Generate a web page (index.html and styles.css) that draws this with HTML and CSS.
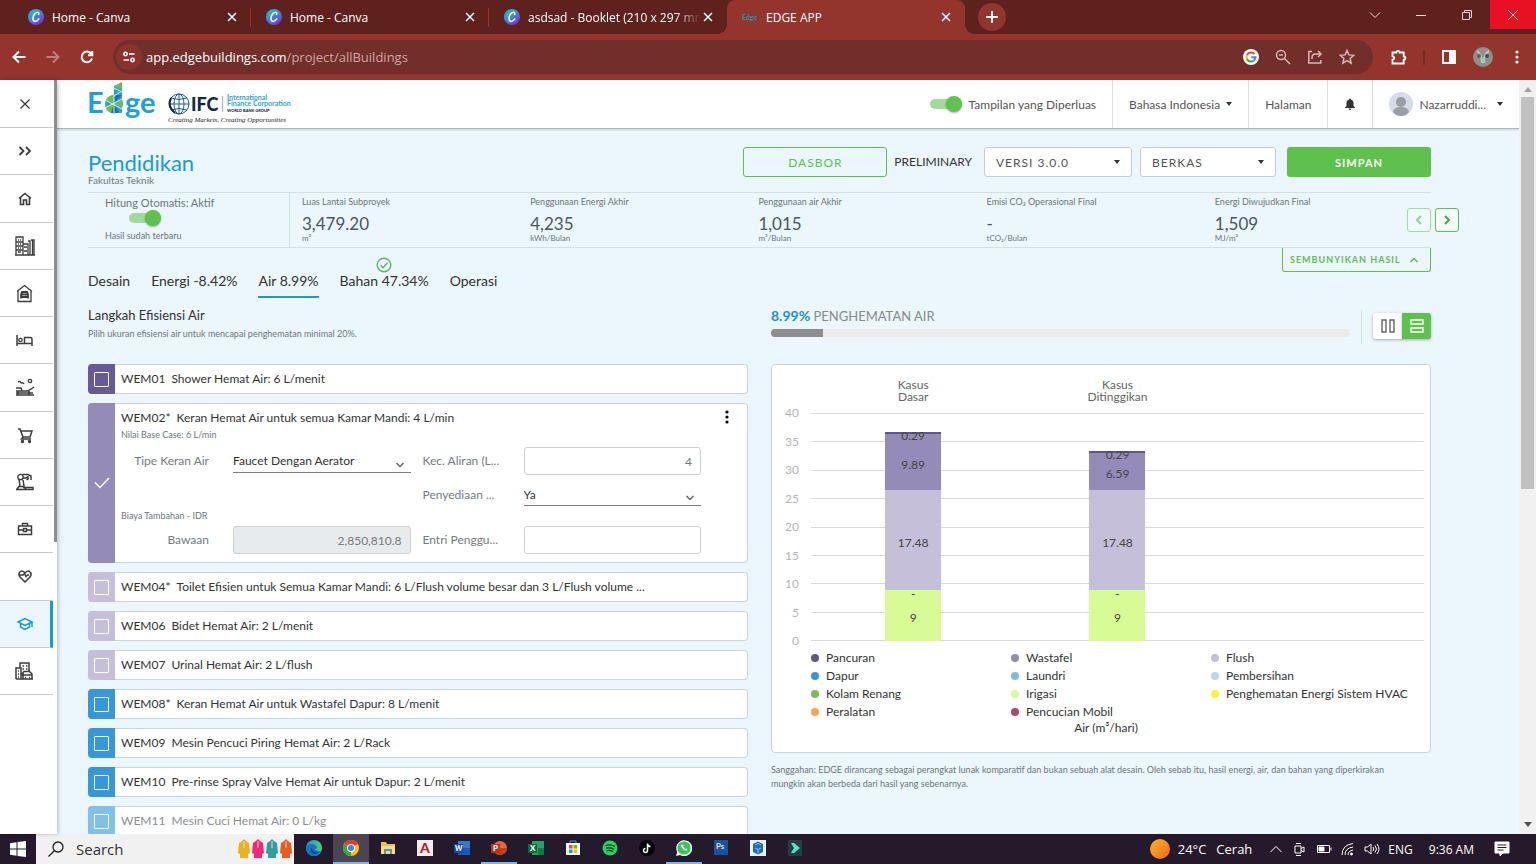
FILE: index.html
```html
<!DOCTYPE html>
<html lang="id">
<head>
  <meta charset="UTF-8">
  <title>EDGE APP</title>
  <link rel="stylesheet" href="styles.css">
</head>
<body>
  <svg class="defs" aria-hidden="true">
    <defs>
      <linearGradient id="canvaFill" x1="0" y1="0" x2="0.7" y2="1">
        <stop offset="0" stop-color="#14c8cc"/>
        <stop offset="0.5" stop-color="#3a8fd8"/>
        <stop offset="1" stop-color="#7a2be0"/>
      </linearGradient>
      <linearGradient id="sunFill" x1="0" y1="0" x2="1" y2="1">
        <stop offset="0" stop-color="#fbb52c"/>
        <stop offset="1" stop-color="#f2641c"/>
      </linearGradient>
      <linearGradient id="edgeFill" x1="0" y1="0" x2="1" y2="0">
        <stop offset="0" stop-color="#1b8fe0"/>
        <stop offset="1" stop-color="#4fd46a"/>
      </linearGradient>
    </defs>
    <symbol id="canva" viewBox="0 0 16 16">
      <circle cx="8" cy="8" r="8" fill="url(#canvaFill)"/>
      <path d="M10.6 5.6c.6-1.6-.5-2.4-1.7-2.2C6.7 3.8 5 6.6 5 9.2c0 2 .9 3.2 2.3 3.2 1.400 0 2.700-1 3.500-2.500" fill="none" stroke="#fff" stroke-width="1.5" stroke-linecap="round"/>
    </symbol>
    <symbol id="x" viewBox="0 0 10 10">
      <path d="M1 1l8 8M9 1l-8 8" fill="none" stroke="currentColor" stroke-width="1.5"/>
    </symbol>
    <symbol id="caret" viewBox="0 0 6 4">
      <path d="M0 0h6L3 4z" fill="currentColor"/>
    </symbol>
    <symbol id="chevron" viewBox="0 0 10 6">
      <path d="M1.500 1L5 4.500 8.500 1" fill="none" stroke="currentColor" stroke-width="1.5"/>
    </symbol>
  </svg>

  <div class="tab-strip">
    <div class="browser-tab">
      <svg class="favicon"><use href="#canva"/></svg>
      <span>Home - Canva</span>
      <button aria-label="Close tab"><svg><use href="#x"/></svg></button>
    </div>
    <div class="browser-tab">
      <svg class="favicon"><use href="#canva"/></svg>
      <span>Home - Canva</span>
      <button aria-label="Close tab"><svg><use href="#x"/></svg></button>
    </div>
    <div class="browser-tab last">
      <svg class="favicon"><use href="#canva"/></svg>
      <span class="faded">asdsad - Booklet (210 x 297 mm</span>
      <button aria-label="Close tab"><svg><use href="#x"/></svg></button>
    </div>
    <div class="browser-tab active">
      <svg class="favicon" viewBox="0 0 16 16"><text x="0" y="11" font-family="Lato" font-weight="900" font-size="7" fill="#2a8ba5">Edge</text></svg>
      <span>EDGE APP</span>
      <button aria-label="Close tab"><svg><use href="#x"/></svg></button>
    </div>
    <button class="new-tab" aria-label="New tab"><svg viewBox="0 0 12 12"><path d="M6 0v12M0 6h12" stroke="currentColor" stroke-width="2"/></svg></button>
    <div class="window-buttons">
      <button aria-label="Search tabs"><svg viewBox="0 0 12 12"><path d="M1 3.500l5 5 5-5"/></svg></button>
      <button aria-label="Minimize"><svg viewBox="0 0 12 12"><path d="M1 6.500h10"/></svg></button>
      <button aria-label="Restore"><svg viewBox="0 0 12 12"><path d="M1.500 3.500h7v7h-7zM3.500 3.500v-2h7v7h-2"/></svg></button>
      <button class="win-close" aria-label="Close"><svg viewBox="0 0 12 12"><path d="M1 1l10 10M11 1L1 11"/></svg></button>
    </div>
  </div>

  <div class="toolbar">
    <button aria-label="Back"><svg viewBox="0 0 16 16"><path d="M14.500 8H2.500M8 2.500L2.500 8 8 13.500"/></svg></button>
    <button class="dim" aria-label="Forward"><svg viewBox="0 0 16 16"><path d="M1.500 8h12M8 2.500L13.500 8 8 13.500"/></svg></button>
    <button aria-label="Reload"><svg viewBox="0 0 16 16"><path d="M13 9.500A5.300 5.300 0 1 1 12 4.500M13.300 2v4.300H9"/></svg></button>
    <div class="omnibox">
      <button class="site-info" aria-label="Site information"><svg viewBox="0 0 14 14"><circle cx="3.500" cy="4" r="1.700"/><path d="M7 4h5.500M1.500 10H7"/><circle cx="10.500" cy="10" r="1.700"/></svg></button>
      <span class="url">app.edgebuildings.com<i>/project/allBuildings</i></span>
      <div class="omni-actions">
        <button aria-label="Google"><svg viewBox="0 0 16 16"><circle class="fill-white" cx="8" cy="8" r="8"/><path d="M11.500 5A4.500 4.500 0 0 0 4 6" stroke="#ea4335" stroke-width="2"/><path d="M4 6a4.500 4.500 0 0 0 0 4" stroke="#fbbc05" stroke-width="2"/><path d="M4 10a4.500 4.500 0 0 0 7 1.500" stroke="#34a853" stroke-width="2"/><path d="M11 11.500A4.500 4.500 0 0 0 12.500 8.300H8.300" stroke="#4285f4" stroke-width="2"/></svg></button>
        <button aria-label="Zoom"><svg viewBox="0 0 16 16"><circle cx="6" cy="6" r="4.500"/><path d="M9.500 9.500l5.500 5.500M4 6h4"/></svg></button>
        <button aria-label="Share"><svg viewBox="0 0 16 16"><path d="M5 2.500H1.800V14h12v-3M5 10V8.500Q5 5 8.500 5H14M11 2l3 3-3 3"/></svg></button>
        <button aria-label="Bookmark"><svg viewBox="0 0 16 16"><path d="M8 1.500l1.900 4.400 4.800.4-3.600 3.200 1 4.700L8 11.700l-4.100 2.500 1-4.700L1.300 6.300l4.800-.4z"/></svg></button>
      </div>
    </div>
    <div class="toolbar-end">
      <button aria-label="Extensions"><svg viewBox="0 0 16 16"><path d="M1.500 3.500h3.800a1.700 1.700 0 1 1 3.400 0h4v3.800a1.700 1.700 0 1 1 0 3.400v3.800H1.500v-3.800a1.700 1.700 0 0 0 0-3.400z" stroke-width="1.800"/></svg></button>
      <span class="bar-sep"></span>
      <button aria-label="Side panel"><svg viewBox="0 0 16 16"><path d="M2 2h12v12H2z" stroke-width="1.800"/><path class="fill-white" d="M8 2h6v12H8z"/></svg></button>
      <button aria-label="Profile"><svg class="profile" viewBox="0 0 20 20"><circle cx="10" cy="10" r="10" fill="#8d918c" stroke="none"/><path d="M4 4q5 3 5 12M16 4q-5 2-5 12" stroke="#c0c4be"/><circle cx="6" cy="9" r="2" fill="#5b6161" stroke="none"/><circle cx="14" cy="9" r="2" fill="#454b4b" stroke="none"/></svg></button>
      <button aria-label="Menu"><svg viewBox="0 0 16 16"><g class="fill-white"><circle cx="8" cy="3" r="1.600"/><circle cx="8" cy="8" r="1.600"/><circle cx="8" cy="13" r="1.600"/></g></svg></button>
    </div>
  </div>

  <div class="viewport">
    <nav class="side-nav">
      <ul>
        <li><a href="#" aria-label="Tutup"><svg viewBox="0 0 20 20"><path d="M5.500 5.500l9 9M14.500 5.500l-9 9"/></svg></a></li>
        <li><a href="#" aria-label="Perluas"><svg viewBox="0 0 20 20"><path d="M4.500 6l4 4-4 4M11 6l4 4-4 4" stroke-width="1.800"/></svg></a></li>
        <li><a href="#" aria-label="Beranda"><svg viewBox="0 0 20 20"><path d="M4 9.500L10 4.500l6 5M5.500 8.500V15.500h3v-4.500h3v4.500h3V8.500" stroke-width="1.600"/></svg></a></li>
        <li><a href="#" aria-label="Kantor"><svg viewBox="0 0 20 20"><path d="M1 19V1h7v18M0 19h20M8 8h5v11M13 5h2v14M16 4h3v15M17.500 4v15M3 4h1M5 4h1M3 8h1M5 8h1M3 12h1M5 12h1M3 16h3M9 11h3M9 15h3"/><path d="M1 6h7M1 10h7M1 14h7"/></svg></a></li>
        <li><a href="#" aria-label="Rumah"><svg viewBox="0 0 20 20"><path d="M2 8.500L9.500 2.500 17 8.500M3 8v10.500h13V8"/><path d="M6 15.500v-4l1-2.500h5l1 2.500v4M6.500 11.500h6M6 14h7" stroke-width="1.800"/></svg></a></li>
        <li><a href="#" aria-label="Hotel"><svg viewBox="0 0 20 20"><path d="M2 5v11M2 13.500h15V16M17 13.500V9q0-1.500-1.500-1.500H9.500v6" stroke-width="1.500"/><circle cx="5.500" cy="10" r="1.700"/></svg></a></li>
        <li><a href="#" aria-label="Resor"><svg viewBox="0 0 20 20"><circle cx="15" cy="3" r="1.700"/><path d="M3 4q2-1.500 3 1M6 5q2-1 3 1M1 17h18M1 13h12l6-4M1 10h5l1 3M3 13v4M14 13v4M1 15h17" stroke-width="1.500"/></svg></a></li>
        <li><a href="#" aria-label="Ritel"><svg viewBox="0 0 20 20"><path d="M3 4h2l3 8h7l2-6H6M8 12l-1.500 2H16" stroke-width="1.500"/><circle cx="7.500" cy="16.500" r="1" fill="currentColor"/><circle cx="14.500" cy="16.500" r="1" fill="currentColor"/></svg></a></li>
        <li><a href="#" aria-label="Industri"><svg viewBox="0 0 20 20"><path d="M1 17.500h17v-2H8M2 17l2-2.500h5l2 3M5 14L4 7M9 14l-1-6M7.500 2.500H13l3 1.500v4M13 4v3l-1.500 1M8 6h3l2-1" stroke-width="1.500"/><circle cx="5.500" cy="5" r="2.700"/></svg></a></li>
        <li><a href="#" aria-label="Perkantoran"><svg viewBox="0 0 20 20"><path d="M3.500 7h13v8.500h-13zM7.500 7V4.500h5V7M3.500 11H8M12 11h4.500M8.500 9.500h3v3h-3z" stroke-width="1.500"/></svg></a></li>
        <li><a href="#" aria-label="Kesehatan"><svg viewBox="0 0 20 20"><path d="M10 16L5 11Q3 8.500 4.500 6.500 7 3.500 10 7q3-3.500 5.500-.5Q17 8.500 15 11zM4 9h4l1.500-1.500 1.500 3L12.500 9H14" stroke-width="1.500"/></svg></a></li>
        <li class="current"><a href="#" aria-label="Pendidikan"><svg viewBox="0 0 20 20"><path d="M3 8l7-3.500L17 8l-7 3.500zM5.500 9.500V13L10 15.500 14.500 13V9.500M17 8v5" stroke-width="1.500"/></svg></a></li>
        <li><a href="#" aria-label="Campuran"><svg viewBox="0 0 20 20"><path d="M5 7V2h9v8M1 18V7h5v11M1 18h17M7.500 5H9M11 5h1.500M7.500 8H9M11 8h1.500M3 10h1M3 13h1M3 16h1M7 13l2-2.500h5.500L17 13v5H8v-5zM7 14h10M10 16.500h1M14 16.500h1" stroke-width="1.500"/></svg></a></li>
      </ul>
    </nav>

    <div class="page">
      <header class="site-header">
        <a class="logo" href="#" aria-label="Edge">
          <svg viewBox="0 0 68 42" width="68" height="42">
            <g font-family="Lato" font-weight="700" font-size="29" fill="#1ea0dc">
              <text x="-1" y="32">E</text>
              <text x="37" y="32">ge</text>
            </g>
            <circle cx="26" cy="23" r="9" fill="#2a9fd6"/>
            <path d="M26 5l8-4v31h-8z" fill="#2a9fd6"/>
            <path d="M26 6l8-5v7zM26 23l-8-4q3-5 8-5zM26 23l8-4v8zM26 23l-3 9q-5-2-6-7z" fill="#6cc04a"/>
            <path d="M26 23l-3 9q5 1 8-1zM26 14h8l-8 8z" fill="#1a6fb8"/>
            <path d="M26 14v18M17 19l17 9M17 27l17-9M26 7l8 4M26 15l8-5" stroke="#fff" stroke-width="0.8" fill="none"/>
          </svg>
        </a>
        <a class="logo" href="#" aria-label="IFC">
          <svg viewBox="0 0 124 34" width="124" height="34">
            <g fill="none" stroke="#1d5b92" stroke-width="1">
              <circle cx="11" cy="11" r="10"/>
              <ellipse cx="11" cy="11" rx="5" ry="10"/>
              <path d="M1 11h20M3 5q8 3 16 0M3 17q8-3 16 0M11 1v20"/>
              <path d="M3 5q-4 8 4 15" stroke="#10294a" stroke-width="2"/>
            </g>
            <text x="23" y="18" font-family="Lato" font-weight="900" font-size="18" fill="#10294a">IFC</text>
            <path d="M54.500 3v16" stroke="#8fb9d8"/>
            <g font-family="Lato" font-weight="700" font-size="7" fill="#2aa3dc">
              <text x="59" y="7">International</text>
              <text x="59" y="13">Finance Corporation</text>
            </g>
            <text x="59" y="19" font-family="Lato" font-weight="900" font-size="4" fill="#10294a">WORLD BANK GROUP</text>
            <text x="0" y="29" font-family="Liberation Serif" font-style="italic" font-size="7" fill="#222">Creating Markets, Creating Opportunities</text>
          </svg>
        </a>
        <div class="header-menu">
          <label class="expanded-view"><input class="switch" type="checkbox" checked> Tampilan yang Diperluas</label>
          <button>Bahasa Indonesia <svg class="caret"><use href="#caret"/></svg></button>
          <a href="#">Halaman</a>
          <button aria-label="Notifikasi"><svg class="bell" viewBox="0 0 12 12"><path d="M6 .5q.8 0 .8.900Q9.500 2 9.500 5v3l1.500 1.500v.5H1v-.5L2.500 8V5q0-3 2.700-3.600Q5.200.5 6 .5zM4.700 10.500h2.600Q7 12 6 12t-1.300-1.500z" fill="currentColor"/></svg></button>
          <button class="user"><svg class="avatar" viewBox="0 0 24 24"><circle cx="12" cy="12" r="12" fill="#d5dbe8"/><circle cx="12" cy="10" r="5" fill="#9a9da4"/><path d="M4 20q1-5 8-5t8 5q-3 4-8 4t-8-4z" fill="#9a9da4"/></svg>Nazarruddi...<svg class="caret"><use href="#caret"/></svg></button>
        </div>
      </header>

      <main>
        <div class="title-row">
          <div>
            <h1>Pendidikan</h1>
            <p>Fakultas Teknik</p>
          </div>
          <div class="actions">
            <button class="btn outline">DASBOR</button>
            <span class="status">PRELIMINARY</span>
            <div class="picker version">
              <select aria-label="Versi"><option>VERSI 3.0.0</option></select>
              <svg class="caret"><use href="#caret"/></svg>
            </div>
            <div class="picker file">
              <select aria-label="Berkas"><option>BERKAS</option></select>
              <svg class="caret"><use href="#caret"/></svg>
            </div>
            <button class="btn solid">SIMPAN</button>
          </div>
        </div>

        <section class="results">
          <div class="auto-calc">
            <label for="auto">Hitung Otomatis: Aktif</label>
            <input class="switch" type="checkbox" id="auto" checked>
            <small>Hasil sudah terbaru</small>
          </div>
          <div class="kpis">
            <div class="kpi"><span>Luas Lantai Subproyek</span><strong>3,479.20</strong><small>m²</small></div>
            <div class="kpi"><span>Penggunaan Energi Akhir</span><strong>4,235</strong><small>kWh/Bulan</small></div>
            <div class="kpi"><span>Penggunaan air Akhir</span><strong>1,015</strong><small>m³/Bulan</small></div>
            <div class="kpi"><span>Emisi CO₂ Operasional Final</span><strong>-</strong><small>tCO₂/Bulan</small></div>
            <div class="kpi"><span>Energi Diwujudkan Final</span><strong>1,509</strong><small>MJ/m²</small></div>
          </div>
          <div class="kpi-arrows">
            <button class="prev" aria-label="Sebelumnya" disabled><svg viewBox="0 0 10 10"><path d="M7 1L3 5l4 4"/></svg></button>
            <button aria-label="Berikutnya"><svg viewBox="0 0 10 10"><path d="M3 1l4 4-4 4"/></svg></button>
          </div>
        </section>

        <div class="tabs-row">
          <nav class="tabs">
            <a href="#">Desain</a>
            <a href="#">Energi -8.42%</a>
            <a href="#" class="selected">Air 8.99%</a>
            <a href="#">Bahan 47.34%<svg class="passed" viewBox="0 0 16 16"><circle cx="8" cy="8" r="6.800"/><path d="M4.500 8.300l2.500 2.400 4.500-5"/></svg></a>
            <a href="#">Operasi</a>
          </nav>
          <button class="hide-results">SEMBUNYIKAN HASIL <svg viewBox="0 0 10 6"><path d="M1.500 5L5 1.500 8.500 5"/></svg></button>
        </div>

        <div class="columns intro">
          <div>
            <h2>Langkah Efisiensi Air</h2>
            <p>Pilih ukuran efisiensi air untuk mencapai penghematan minimal 20%.</p>
          </div>
          <div class="savings">
            <div class="savings-bar">
              <p><b>8.99%</b> PENGHEMATAN AIR</p>
              <div class="track"><div class="fill" style="width: 8.99%"></div></div>
            </div>
            <div class="layout-switch">
              <button aria-label="Kolom"><svg viewBox="0 0 14 14"><path d="M1 1h4v12H1zM9 1h4v12H9z"/></svg></button>
              <button class="on" aria-label="Baris"><svg viewBox="0 0 14 14"><path d="M1 1h12v4H1zM1 9h12v4H1z"/></svg></button>
            </div>
          </div>
        </div>

        <div class="columns">
          <div class="measures">
            <div class="measure shower">
              <div class="tick"><input type="checkbox" id="wem01"></div>
              <label for="wem01"><span>WEM01</span>Shower Hemat Air: 6 L/menit</label>
            </div>
            <div class="measure basin">
              <div class="tick"><input type="checkbox" id="wem02" checked><svg viewBox="0 0 16 12"><path d="M1 5.500L6 10.500 15 1"/></svg></div>
              <div class="measure-body">
                <label for="wem02"><span>WEM02*</span>Keran Hemat Air untuk semua Kamar Mandi: 4 L/min</label>
                <button class="more" aria-label="Opsi lain"><svg viewBox="0 0 4 14"><circle cx="2" cy="2" r="1.600"/><circle cx="2" cy="7" r="1.600"/><circle cx="2" cy="12" r="1.600"/></svg></button>
                <p>Nilai Base Case: 6 L/min</p>
                <div class="fields usage">
                  <label for="type">Tipe Keran Air</label>
                  <div class="line-select">
                    <select id="type"><option>Faucet Dengan Aerator</option></select>
                    <svg><use href="#chevron"/></svg>
                  </div>
                  <label for="flow">Kec. Aliran (L...</label>
                  <input type="text" id="flow" value="4">
                  <label class="second" for="supply">Penyediaan ...</label>
                  <div class="line-select">
                    <select id="supply"><option>Ya</option></select>
                    <svg><use href="#chevron"/></svg>
                  </div>
                </div>
                <p>Biaya Tambahan - IDR</p>
                <div class="fields cost">
                  <label for="default">Bawaan</label>
                  <input type="text" id="default" value="2,850,810.8" disabled>
                  <label for="entry">Entri Penggu...</label>
                  <input type="text" id="entry">
                </div>
              </div>
            </div>
            <div class="measure flush">
              <div class="tick"><input type="checkbox" id="wem04"></div>
              <label for="wem04"><span>WEM04*</span>Toilet Efisien untuk Semua Kamar Mandi: 6 L/Flush volume besar dan 3 L/Flush volume ...</label>
            </div>
            <div class="measure flush">
              <div class="tick"><input type="checkbox" id="wem06"></div>
              <label for="wem06"><span>WEM06</span>Bidet Hemat Air: 2 L/menit</label>
            </div>
            <div class="measure flush">
              <div class="tick"><input type="checkbox" id="wem07"></div>
              <label for="wem07"><span>WEM07</span>Urinal Hemat Air: 2 L/flush</label>
            </div>
            <div class="measure kitchen">
              <div class="tick"><input type="checkbox" id="wem08"></div>
              <label for="wem08"><span>WEM08*</span>Keran Hemat Air untuk Wastafel Dapur: 8 L/menit</label>
            </div>
            <div class="measure kitchen">
              <div class="tick"><input type="checkbox" id="wem09"></div>
              <label for="wem09"><span>WEM09</span>Mesin Pencuci Piring Hemat Air: 2 L/Rack</label>
            </div>
            <div class="measure kitchen">
              <div class="tick"><input type="checkbox" id="wem10"></div>
              <label for="wem10"><span>WEM10</span>Pre-rinse Spray Valve Hemat Air untuk Dapur: 2 L/menit</label>
            </div>
            <div class="measure laundry">
              <div class="tick"><input type="checkbox" id="wem11"></div>
              <label for="wem11"><span>WEM11</span>Mesin Cuci Hemat Air: 0 L/kg</label>
            </div>
          </div>

          <div>
            <div class="chart">
              <div class="chart-heads">
                <span>Kasus<br>Dasar</span>
                <span>Kasus<br>Ditinggikan</span>
              </div>
              <div class="plot">
                <div class="scale">
                  <span>40</span><span>35</span><span>30</span><span>25</span><span>20</span><span>15</span><span>10</span><span>5</span><span>0</span>
                </div>
                <div class="area">
                  <i></i><i></i><i></i><i></i><i></i><i></i><i></i><i></i><i></i>
                  <div class="bars">
                    <div class="bar">
                      <div class="seg thin c-shower" style="height: 0.73%"><span>0.29</span></div>
                      <div class="seg c-basin" style="height: 24.73%">9.89</div>
                      <div class="seg c-flush" style="height: 43.7%">17.48</div>
                      <div class="seg thin" style="height: 0%"><span>-</span></div>
                      <div class="seg c-irrigation" style="height: 22.5%">9</div>
                    </div>
                    <div class="bar">
                      <div class="seg thin c-shower" style="height: 0.73%"><span>0.29</span></div>
                      <div class="seg c-basin" style="height: 16.48%">6.59</div>
                      <div class="seg c-flush" style="height: 43.7%">17.48</div>
                      <div class="seg thin" style="height: 0%"><span>-</span></div>
                      <div class="seg c-irrigation" style="height: 22.5%">9</div>
                    </div>
                  </div>
                </div>
              </div>
              <ul class="legend">
                <li><i class="c-shower"></i>Pancuran</li>
                <li><i class="c-basin"></i>Wastafel</li>
                <li><i class="c-flush"></i>Flush</li>
                <li><i class="c-kitchen"></i>Dapur</li>
                <li><i class="c-laundry"></i>Laundri</li>
                <li><i class="c-cleaning"></i>Pembersihan</li>
                <li><i class="c-pool"></i>Kolam Renang</li>
                <li><i class="c-irrigation"></i>Irigasi</li>
                <li><i class="c-hvac"></i>Penghematan Energi Sistem HVAC</li>
                <li><i class="c-appliance"></i>Peralatan</li>
                <li><i class="c-car"></i>Pencucian Mobil</li>
              </ul>
              <p class="unit">Air (m³/hari)</p>
            </div>
            <p class="disclaimer">Sanggahan: EDGE dirancang sebagai perangkat lunak komparatif dan bukan sebuah alat desain. Oleh sebab itu, hasil energi, air, dan bahan yang diperkirakan mungkin akan berbeda dari hasil yang sebenarnya.</p>
          </div>
        </div>
      </main>
    </div>

    <div class="scrollbar">
      <svg viewBox="0 0 8 5"><path d="M0 5l4-5 4 5z" fill="#a3a3a3"/></svg>
      <div class="thumb"></div>
      <svg viewBox="0 0 8 5"><path d="M0 0h8L4 5z" fill="#505050"/></svg>
    </div>
  </div>

  <footer class="taskbar">
    <button class="start" aria-label="Start"><svg viewBox="0 0 16 16"><path d="M0 2.200L6.500 1.300V7.500H0zM7.500 1.100L16 0v7.500H7.500zM0 8.500h6.500v6.200L0 13.800zM7.500 8.500H16V16l-8.500-1.100z" fill="#fff"/></svg></button>
    <label class="search">
      <svg class="glass" viewBox="0 0 16 16"><circle cx="10" cy="6" r="5"/><path d="M6.300 9.700L.5 15.500"/></svg>
      <input type="text" placeholder="Search">
      <svg class="coats" viewBox="0 0 54 20">
        <path d="M4 2l2-2 2 2 3 2 1 10-2 1v4H2v-4l-2-1L1 4z" fill="#e9b21f"/>
        <path d="M18 2l2-2 2 2 3 2 1 10-2 1v4h-8v-4l-2-1 1-10z" fill="#f0287a"/>
        <path d="M32 2l2-2 2 2 3 2 1 10-2 1v4h-8v-4l-2-1 1-10z" fill="#2f9ea3"/>
        <path d="M46 2l2-2 2 2 3 2 1 10-2 1v4h-8v-4l-2-1 1-10z" fill="#ec5a23"/>
        <path d="M6 2v7M20 2v7M34 2v7M48 2v7" stroke="#f6dcae" stroke-width="1"/>
      </svg>
    </label>
    <div class="apps">
      <button aria-label="Edge"><svg viewBox="0 0 16 16"><circle cx="8" cy="8" r="8" fill="url(#edgeFill)"/><path d="M0 9q1-5 6-5 5 1 5 4-1 1-2 1 0 2 6 2-2 5-7 5-7 0-8-7z" fill="#1673c8"/><path d="M6 8q0 5 7 4-5 4-8 0-1-3 1-4z" fill="#0d4a8c"/></svg></button>
      <button class="focused running" aria-label="Chrome"><svg viewBox="0 0 16 16"><circle cx="8" cy="8" r="8" fill="#fbc116"/><path d="M8 8L1 4a8 8 0 0 1 14 0z" fill="#e33b2e"/><path d="M8 8l0 8A8 8 0 0 1 1 4z" fill="#2da94f"/><circle cx="8" cy="8" r="4" fill="#fff"/><circle cx="8" cy="8" r="3" fill="#3f7fe8"/></svg></button>
      <button aria-label="File Explorer"><svg viewBox="0 0 16 16"><path d="M1 2h5l1 2h8v10H1z" fill="#f3c14b"/><path d="M1 6h14v8H1z" fill="#fbdc7c"/><path d="M4 14V9h8v5h-2v-3H6v3z" fill="#3f9bd8"/></svg></button>
      <button aria-label="AutoCAD"><svg viewBox="0 0 16 16"><path d="M0 0h16v16H0z" fill="#f3eeee"/><text x="3" y="13" font-family="Lato" font-weight="900" font-size="14" fill="#b21f2d">A</text></svg></button>
      <button aria-label="Word"><svg viewBox="0 0 16 16"><path d="M4 1h12v14H4z" fill="#2b7cd3"/><path d="M4 8h12v7H4z" fill="#185abd"/><path d="M0 4h9v9H0z" fill="#164a9c"/><text x="1" y="11" font-family="Lato" font-weight="900" font-size="7" fill="#fff">W</text></svg></button>
      <button class="running" aria-label="PowerPoint"><svg viewBox="0 0 16 16"><circle cx="9" cy="8" r="7" fill="#e8663f"/><path d="M9 8h7a7 7 0 0 1-14 0z" fill="#c43e1c"/><path d="M0 4h9v9H0z" fill="#b7361a"/><text x="2" y="11" font-family="Lato" font-weight="900" font-size="8" fill="#fff">P</text></svg></button>
      <button aria-label="Excel"><svg viewBox="0 0 16 16"><path d="M4 1h12v14H4z" fill="#21a366"/><path d="M10 8h6v7h-6z" fill="#107c41"/><path d="M0 4h9v9H0z" fill="#0e6a38"/><text x="2" y="11" font-family="Lato" font-weight="900" font-size="8" fill="#fff">X</text></svg></button>
      <button aria-label="Store"><svg viewBox="0 0 16 16"><path d="M5 4V1h6v3" stroke="#3aa0d8" fill="none"/><path d="M1 3h14v12H1z" fill="#f4f6f8"/><path d="M4 5h3.500v3.500H4z" fill="#f25022"/><path d="M8.500 5H12v3.500H8.500z" fill="#7fba00"/><path d="M4 9.500h3.500V13H4z" fill="#00a4ef"/><path d="M8.500 9.500H12V13H8.500z" fill="#ffb900"/></svg></button>
      <button aria-label="Spotify"><svg viewBox="0 0 16 16"><circle cx="8" cy="8" r="7.500" fill="#1ed760"/><path d="M3.500 5.500q5-1.500 9.500 1M4 8.200q4-1.200 8 1M4.500 10.800q3.500-1 6.500.8" stroke="#12301d" stroke-width="1.300" fill="none"/></svg></button>
      <button aria-label="TikTok"><svg viewBox="0 0 16 16"><circle cx="8" cy="8" r="8" fill="#050505"/><path d="M8.500 3.500v7a2 2 0 1 1-2-2M8.500 4q.5 2.500 3 2.500" stroke="#fff" stroke-width="1.500" fill="none"/></svg></button>
      <button class="running" aria-label="WhatsApp"><svg viewBox="0 0 16 16"><path d="M0 16l1.200-4A8 8 0 1 1 4 15z" fill="#f2f7f3"/><circle cx="8" cy="8" r="6.600" fill="#35c759"/><path d="M5.300 4.800q-1 1.500 1.400 4t4.500 1.500q.7-1-.3-1.600-1-.5-1.500.3-1.500-.7-2.200-2.200.7-.6.200-1.400-.9-1.500-2.100-.6z" fill="#fff"/></svg></button>
      <button aria-label="Photoshop"><svg viewBox="0 0 16 16"><path d="M1 0h14v15H1z" fill="#1c4f9c"/><text x="3" y="9" font-family="Lato" font-weight="700" font-size="8" fill="#cfe3ff">Ps</text></svg></button>
      <button aria-label="SketchUp"><svg viewBox="0 0 16 16"><path d="M0 0h16v16H0z" fill="#e8f1f7"/><path d="M8 1.500l5 2.500v8l-5 2.500L3 12V4z" fill="#1d6fae"/><path d="M5 5l3-1.500L11 5M5 8l3 1.500v4M11 8l-3 1.500" stroke="#8fc0e0" fill="none"/></svg></button>
      <button aria-label="Filmora"><svg viewBox="0 0 16 16"><path d="M1 0h14v16H1z" fill="#263b44"/><path d="M4 3h3l6 5-6 5H4l3-5z" fill="#4ee6c0"/></svg></button>
    </div>
    <div class="tray">
      <svg class="sun" viewBox="0 0 20 20"><circle cx="10" cy="10" r="10" fill="url(#sunFill)"/></svg>
      <span class="weather"><span>24°C</span><span>Cerah</span></span>
      <svg class="tray-icon" viewBox="0 0 16 16"><path d="M2.500 11L8 5.500l5.500 5.500"/></svg>
      <svg class="tray-icon" viewBox="0 0 16 16"><path d="M3 5h6v7H3zM9 7.500l3-1.500v5L9 9.500M4 2.500h5M4 14.500h5"/></svg>
      <svg class="tray-icon" viewBox="0 0 16 16"><path d="M1.500 4.500h12v7h-12zM15 6.500v3"/><path d="M3 6h5v4H3z" fill="#fff"/></svg>
      <svg class="tray-icon" viewBox="0 0 16 16"><path d="M2 14Q2 4 13 2.500M5 14Q5 7 13 6M8 14q0-4 5-5"/><circle cx="11.500" cy="13" r="1" fill="#fff"/></svg>
      <svg class="tray-icon" viewBox="0 0 16 16"><path d="M1 6h2.500L7 3v10L3.500 10H1zM9 6q1.500 2 0 4M11 4.500q3 3.500 0 7M13 3q4 5 0 10"/></svg>
      <span class="lang">ENG</span>
      <span class="clock">9:36 AM</span>
      <svg class="tray-icon" viewBox="0 0 16 16"><path d="M1 1h14v11H9l-3 3v-3H1z" fill="#fff"/><path d="M3.500 4h9M3.500 6.500h9M3.500 9h6" stroke="#241a2b"/></svg>
    </div>
  </footer>
</body>
</html>
```
FILE: styles.css
```css
* {
  box-sizing: border-box;
}

body {
  margin: 0;
  height: 100vh;
  display: flex;
  flex-direction: column;
  overflow: hidden;
  font-family: Lato, sans-serif;
  font-size: 12px;
  color: #333;
}

button, input, select {
  font-family: inherit;
  font-size: inherit;
  color: inherit;
}

button {
  background: none;
  border: none;
  padding: 0;
  cursor: pointer;
}

h1, h2, p, ul {
  margin: 0;
  padding: 0;
  font-weight: 400;
}

ul {
  list-style: none;
}

a {
  color: inherit;
  text-decoration: none;
}

svg {
  display: block;
  flex-shrink: 0;
}

.defs {
  position: absolute;
  width: 0;
  height: 0;
}

/* browser window */

.tab-strip {
  flex-shrink: 0;
  display: flex;
  height: 34px;
  padding-left: 13px;
  background-color: #5f211d;
  color: #fff;
  font-family: "Open Sans", sans-serif;
}

.browser-tab {
  position: relative;
  display: flex;
  align-items: center;
  width: 238px;
  padding: 0 14px 0 15px;
  gap: 8px;
}

.browser-tab::after {
  content: "";
  position: absolute;
  right: 0;
  top: 8px;
  width: 1px;
  height: 19px;
  background-color: #93342d;
}

.browser-tab.last::after {
  display: none;
}

.browser-tab span {
  flex: 1;
  overflow: hidden;
  white-space: nowrap;
}

.browser-tab .faded {
  margin-right: -6px;
  mask-image: linear-gradient(to right, #000 85%, transparent);
}

.browser-tab button svg {
  width: 10px;
  height: 10px;
}

.favicon {
  width: 16px;
  height: 16px;
}

.browser-tab.active {
  background-color: #93342d;
  border-radius: 8px 8px 0 0;
}

.browser-tab.active::before,
.browser-tab.active::after {
  content: "";
  position: absolute;
  top: auto;
  bottom: 0;
  width: 10px;
  height: 10px;
  background: radial-gradient(circle at 0 0, transparent 10px, #93342d 10px);
}

.browser-tab.active::before {
  left: -10px;
}

.browser-tab.active::after {
  right: -10px;
  background: radial-gradient(circle at 100% 0, transparent 10px, #93342d 10px);
}

.new-tab {
  display: flex;
  align-items: center;
  justify-content: center;
  width: 28px;
  height: 28px;
  margin: 3px 0 0 13px;
  border-radius: 50%;
  background-color: #93342d;
}

.new-tab svg {
  width: 12px;
  height: 12px;
}

.window-buttons {
  display: flex;
  margin-left: auto;
}

.window-buttons button {
  display: flex;
  align-items: center;
  justify-content: center;
  width: 46px;
  height: 29px;
}

.window-buttons svg {
  width: 12px;
  height: 12px;
  fill: none;
  stroke: #f3dcda;
}

.window-buttons .win-close {
  background-color: #e81123;
}

.toolbar {
  flex-shrink: 0;
  display: flex;
  align-items: center;
  height: 46px;
  padding: 0 11px;
  gap: 18px;
  background-color: #93342d;
  color: #fff;
}

.toolbar svg {
  width: 16px;
  height: 16px;
  fill: none;
  stroke: currentColor;
  stroke-width: 2;
}

.toolbar .fill-white {
  fill: #fff;
  stroke: none;
}

.toolbar .dim {
  color: #bd7f7a;
}

.omnibox {
  flex: 1;
  display: flex;
  align-items: center;
  height: 34px;
  padding: 0 18px 0 3px;
  border-radius: 17px;
  background-color: #722e2a;
}

.site-info {
  display: flex;
  align-items: center;
  justify-content: center;
  width: 26px;
  height: 26px;
  border-radius: 50%;
  background-color: #8a322c;
}

.toolbar .site-info svg {
  width: 14px;
  height: 14px;
  stroke-width: 1.5;
}

.url {
  margin-left: 4px;
  font-family: "Open Sans", sans-serif;
  font-size: 13px;
}

.url i {
  font-style: normal;
  color: #d0a5a2;
}

.omni-actions {
  display: flex;
  gap: 16px;
  margin-left: auto;
  color: #d9b7b4;
}

.omni-actions svg {
  stroke-width: 1.5;
}

.toolbar-end {
  display: flex;
  align-items: center;
  gap: 16px;
}

.bar-sep {
  width: 2px;
  height: 15px;
  background-color: #722e2a;
}

.toolbar .profile {
  width: 20px;
  height: 20px;
}

.viewport {
  flex: 1;
  display: flex;
  min-height: 0;
  background-color: #ebf6fd;
}

/* side navigation */

.side-nav {
  position: relative;
  z-index: 1;
  flex-shrink: 0;
  width: 57px;
  padding: 1px 0 139px;
  background-color: #fff;
  box-shadow: 1px 0 4px rgba(0, 0, 0, 0.25);
}

.side-nav::after {
  content: "";
  position: absolute;
  top: 0;
  right: 0;
  width: 3px;
  height: 462px;
  background-color: #8e8e8e;
}

.side-nav ul {
  display: flex;
  flex-direction: column;
  width: 53px;
  height: 100%;
}

.side-nav li {
  flex: 1;
  border-bottom: 1px solid #c9c9c9;
}

.side-nav a {
  display: flex;
  align-items: center;
  justify-content: center;
  height: 100%;
  padding-right: 4px;
  color: #3c3c3c;
}

.side-nav svg {
  width: 20px;
  height: 20px;
  fill: none;
  stroke: currentColor;
  stroke-width: 1.3;
}

.side-nav .current {
  background-color: #ebf6fd;
  border-right: 3px solid #179bd7;
}

.side-nav .current a {
  color: #179bd7;
  padding-right: 1px;
}

.page {
  flex: 1;
  min-width: 0;
}

.site-header {
  display: flex;
  height: 49px;
  padding-left: 31px;
  gap: 12px;
  background-color: #fff;
  border-bottom: 1px solid #a9b8c0;
  box-shadow: 0 1px 2px rgba(0, 0, 0, 0.15);
}

.logo {
  padding-top: 1px;
}

.logo svg {
  overflow: visible;
}

.logo + .logo {
  padding-top: 13px;
}

.header-menu {
  display: flex;
  margin-left: auto;
  color: #555;
}

.header-menu > * {
  display: flex;
  align-items: center;
  padding: 0 16px;
  border-left: 1px solid #dedede;
}

.header-menu .expanded-view {
  border-left: none;
}

.switch {
  appearance: none;
  position: relative;
  width: 32px;
  height: 10px;
  margin: 0 7px 0 0;
  border-radius: 5px;
  background-color: #a3d99a;
}

.switch::after {
  content: "";
  position: absolute;
  right: 0;
  top: -3px;
  width: 16px;
  height: 16px;
  border-radius: 50%;
  background-color: #5ec14d;
  box-shadow: 0 1px 2px rgba(0, 0, 0, 0.3);
}

.caret {
  width: 6px;
  height: 4px;
  color: #333;
}

.header-menu .caret {
  margin-left: 6px;
}

.bell {
  width: 12px;
  height: 12px;
  color: #333;
}

.avatar {
  width: 24px;
  height: 24px;
  margin-right: 6px;
}

.header-menu .user .caret {
  margin-left: 11px;
}

main {
  padding: 18px 88px 0 31px;
}

/* title and results */

.title-row {
  display: flex;
  justify-content: space-between;
  height: 45px;
}

h1 {
  padding-top: 4px;
  font-size: 22px;
  line-height: 24px;
  color: #179bd7;
}

.title-row p {
  font-size: 10px;
  line-height: 10px;
  color: #6d767c;
}

.actions {
  display: flex;
  height: 30px;
}

.btn {
  width: 144px;
  border-radius: 3px;
  letter-spacing: 1px;
}

.btn.outline {
  border: 1px solid #5ec14d;
  color: #5ec14d;
}

.btn.solid {
  background-color: #5ec14d;
  color: #fff;
  font-size: 11px;
  font-weight: 700;
}

.status {
  padding: 0 12px 0 7px;
  line-height: 30px;
}

.picker {
  position: relative;
}

.picker.version {
  width: 148px;
  margin-right: 8px;
}

.picker.file {
  width: 136px;
  margin-right: 11px;
}

.picker select {
  appearance: none;
  width: 100%;
  height: 100%;
  padding: 0 11px;
  border: 1px solid #c3cdd4;
  border-radius: 3px;
  background-color: #fff;
  color: #555;
  letter-spacing: 1px;
}

.picker .caret {
  position: absolute;
  right: 12px;
  top: 13px;
}

.results {
  position: relative;
  display: flex;
  height: 56px;
  border-top: 1px solid #d3e0e8;
  border-bottom: 1px solid #d3e0e8;
}

.auto-calc {
  display: flex;
  flex-direction: column;
  width: 202px;
  padding: 2px 0 0 17px;
  border-right: 1px solid #d3e0e8;
  font-size: 11px;
  line-height: 15px;
  color: #6d767c;
}

.auto-calc .switch {
  margin: 3px 0 5px 24px;
}

.auto-calc small {
  font-size: 9px;
}

.kpis {
  flex: 1;
  display: grid;
  grid-template-columns: repeat(5, 1fr);
}

.kpi {
  display: flex;
  flex-direction: column;
  padding: 3px 0 0 12px;
  color: #6d767c;
}

.kpi span {
  font-size: 9px;
  line-height: 12px;
}

.kpi strong {
  margin-top: 6px;
  font-size: 17px;
  font-weight: 400;
  line-height: 20px;
  color: #4c555b;
}

.kpi small {
  font-size: 8px;
  line-height: 9px;
}

.kpi-arrows {
  position: absolute;
  right: -28px;
  top: 15px;
  display: flex;
  gap: 4px;
}

.kpi-arrows button {
  display: flex;
  align-items: center;
  justify-content: center;
  width: 24px;
  height: 24px;
  border: 1px solid #5ec14d;
  border-radius: 3px;
  background-color: #f3fbfb;
}

.kpi-arrows .prev {
  opacity: 0.5;
}

.kpi-arrows svg {
  width: 10px;
  height: 10px;
  fill: none;
  stroke: #3fa838;
  stroke-width: 2;
}

.tabs-row {
  display: flex;
  justify-content: space-between;
  height: 50px;
}

.tabs {
  display: flex;
  align-items: flex-end;
  gap: 21px;
  font-size: 14px;
  line-height: 20px;
}

.tabs a {
  position: relative;
  padding-bottom: 5px;
  border-bottom: 2px solid transparent;
}

.tabs .selected {
  border-color: #179bd7;
}

.passed {
  position: absolute;
  left: calc(50% - 8px);
  top: -14px;
  width: 16px;
  height: 16px;
  fill: none;
  stroke: #5cb860;
  stroke-width: 1.4;
}

.hide-results {
  display: flex;
  align-items: center;
  justify-content: space-between;
  width: 149px;
  height: 24px;
  padding: 0 11px 0 7px;
  border: 1px solid #5ec14d;
  border-top: none;
  border-radius: 0 0 3px 3px;
  color: #5ec14d;
  font-size: 9px;
  font-weight: 700;
  letter-spacing: 1px;
  white-space: nowrap;
}

.hide-results svg {
  width: 10px;
  height: 6px;
  fill: none;
  stroke: currentColor;
  stroke-width: 1.5;
}

.columns {
  display: grid;
  grid-template-columns: minmax(0, 1fr) minmax(0, 1fr);
  gap: 23px;
}

.intro {
  height: 66px;
  padding-top: 8px;
}

h2 {
  font-size: 13px;
  line-height: 18px;
}

.intro h2 + p {
  margin-top: 3px;
  font-size: 9px;
  line-height: 14px;
  color: #6d767c;
}

.savings {
  display: flex;
}

.savings-bar {
  flex: 1;
  font-size: 13px;
  line-height: 20px;
  color: #858b90;
}

.savings-bar b {
  font-size: 14px;
  color: #1d8fce;
}

.track {
  height: 8px;
  margin-top: 3px;
  border-radius: 4px;
  background-color: #ebebec;
  overflow: hidden;
}

.fill {
  height: 100%;
  background-color: #8d8d8d;
}

.layout-switch {
  display: flex;
  height: 34px;
  margin: 4px 0 0 11px;
  padding: 3px 0 5px 11px;
  border-left: 1px solid #d3e0e8;
}

.layout-switch button {
  display: flex;
  align-items: center;
  justify-content: center;
  width: 29px;
  border-radius: 3px 0 0 3px;
  background-color: #fff;
  color: #666;
  box-shadow: 0 1px 3px rgba(0, 0, 0, 0.3);
}

.layout-switch .on {
  border-radius: 0 3px 3px 0;
  background-color: #5ec14d;
  color: #fff;
}

.layout-switch svg {
  width: 14px;
  height: 14px;
  fill: none;
  stroke: currentColor;
  stroke-width: 1.4;
}

/* measures */

.measures {
  display: flex;
  flex-direction: column;
  gap: 9px;
}

.measure {
  display: flex;
  align-items: stretch;
  min-height: 30px;
  border: 1px solid #c5d6e0;
  border-left: none;
  border-radius: 4px;
  background-color: #fff;
}

.measure > label {
  padding-left: 6px;
  line-height: 28px;
}

.measure label span {
  margin-right: 6px;
}

.tick {
  display: flex;
  align-items: center;
  justify-content: center;
  width: 27px;
  margin: -1px 0;
  border-radius: 4px 0 0 4px;
}

.tick input {
  appearance: none;
  width: 15px;
  height: 15px;
  margin: 0;
  border: 1px solid #fff;
  border-radius: 1px;
}

.tick input:checked {
  display: none;
}

.tick svg {
  width: 16px;
  height: 12px;
  fill: none;
  stroke: #fff;
  stroke-width: 1.5;
}

.shower .tick {
  background-color: #665a97;
}

.basin .tick {
  background-color: #948bb9;
}

.flush .tick {
  background-color: #c5bfd9;
}

.kitchen .tick {
  background-color: #3698da;
}

.laundry .tick {
  background-color: #7fc1ea;
}

.laundry label {
  color: #8b8f93;
}

.measure-body {
  position: relative;
  flex: 1;
  padding: 5px 46px 8px 6px;
  line-height: 18px;
}

.measure-body > p {
  font-size: 9px;
  line-height: 16px;
  color: #6d767c;
}

.more {
  position: absolute;
  right: 18px;
  top: 6px;
}

.more svg {
  width: 4px;
  height: 14px;
}

.fields {
  display: grid;
  grid-template-columns: 100px 1fr 89px 1fr;
  align-items: center;
  column-gap: 12px;
  row-gap: 8px;
  color: #757a7e;
}

.fields.usage {
  padding: 4px 0 2px;
}

.fields.cost {
  margin-top: 2px;
}

.fields label:first-child {
  padding-right: 12px;
  text-align: right;
}

.fields .second {
  grid-column: 3;
}

.fields > input {
  width: 100%;
  height: 28px;
  padding: 0 8px;
  border: 1px solid #cfcfcf;
  border-radius: 3px;
  text-align: right;
}

.fields > input:disabled {
  background-color: #e8ebed;
}

.line-select {
  position: relative;
  border-bottom: 1px solid #7d7d7d;
  color: #333;
}

.line-select select {
  appearance: none;
  width: 100%;
  height: 22px;
  padding: 0;
  border: none;
  background: none;
}

.line-select svg {
  position: absolute;
  right: 6px;
  bottom: 4px;
  width: 10px;
  height: 6px;
  color: #666;
}

/* chart */

.chart {
  padding: 14px 6px 17px 8px;
  border: 1px solid #c5d6e0;
  border-radius: 4px;
  background-color: #fff;
}

.chart-heads {
  display: grid;
  grid-template-columns: repeat(3, 1fr);
  margin-left: 31px;
  text-align: center;
  line-height: 12px;
  color: #666;
}

.plot {
  display: flex;
  margin-top: 10px;
}

.scale {
  display: flex;
  flex-direction: column;
  justify-content: space-between;
  width: 19px;
  margin: -8px 12px -8px 0;
  line-height: 16px;
  text-align: right;
  color: #b5b5b5;
}

.area {
  position: relative;
  flex: 1;
  display: flex;
  flex-direction: column;
  justify-content: space-between;
  height: 228px;
}

.area > i {
  height: 1px;
  background-color: #d9d9d9;
}

.bars {
  position: absolute;
  inset: 0;
  display: grid;
  grid-template-columns: repeat(3, 1fr);
  justify-items: center;
}

.bar {
  display: flex;
  flex-direction: column;
  justify-content: flex-end;
  width: 56px;
  height: 100%;
}

.seg {
  position: relative;
  display: flex;
  align-items: center;
  justify-content: center;
  padding-top: 5px;
  color: #444;
}

.seg.thin {
  padding-top: 0;
}

.seg span {
  position: absolute;
  top: -3px;
  z-index: 1;
  line-height: 14px;
}

.legend {
  display: grid;
  grid-template-columns: repeat(3, 200px);
  margin: 8px 0 0 31px;
  line-height: 18px;
}

.legend li {
  display: flex;
  align-items: center;
  gap: 7px;
  white-space: nowrap;
}

.legend i {
  width: 8px;
  height: 8px;
  border-radius: 50%;
}

.c-shower {
  background-color: #5f5690;
}

.c-basin {
  background-color: #948bb9;
}

.c-flush {
  background-color: #c5bfd9;
}

.c-kitchen {
  background-color: #3698da;
}

.c-laundry {
  background-color: #79bde6;
}

.c-cleaning {
  background-color: #b5d9f0;
}

.c-pool {
  background-color: #82b85c;
}

.c-irrigation {
  background-color: #d9fb96;
}

.c-hvac {
  background-color: #fdf133;
}

.c-appliance {
  background-color: #fba64a;
}

.c-car {
  background-color: #a8496c;
}

.unit {
  padding-left: 8px;
  text-align: center;
  line-height: 14px;
}

.disclaimer {
  margin-top: 10px;
  padding-right: 16px;
  font-size: 9px;
  line-height: 14px;
  color: #6d767c;
}

.scrollbar {
  flex-shrink: 0;
  display: flex;
  flex-direction: column;
  align-items: center;
  width: 17px;
  padding: 7px 0;
  background-color: #f1f1f1;
}

.scrollbar svg {
  width: 8px;
  height: 5px;
}

.thumb {
  width: 13px;
  height: 53%;
  margin: 5px 0 auto;
  background-color: #c1c1c1;
}

/* taskbar */

.taskbar {
  flex-shrink: 0;
  display: flex;
  height: 30px;
  background-color: #241a2b;
  color: #fff;
  font-family: "Open Sans", sans-serif;
}

.start {
  display: flex;
  align-items: center;
  justify-content: center;
  width: 36px;
}

.start svg {
  width: 16px;
  height: 16px;
}

.search {
  display: flex;
  align-items: center;
  width: 258px;
  padding: 0 2px 0 12px;
  background-color: #f1f1f1;
}

.search input {
  flex: 1;
  min-width: 0;
  padding: 0 12px;
  border: none;
  background: none;
  font-size: 15px;
}

.search input::placeholder {
  color: #333;
}

.glass {
  width: 16px;
  height: 16px;
  fill: none;
  stroke: #222;
  stroke-width: 1.3;
}

.coats {
  width: 54px;
  height: 20px;
}

.apps {
  display: flex;
  gap: 1px;
  margin-left: 2px;
}

.apps button {
  display: flex;
  align-items: center;
  justify-content: center;
  width: 36px;
  border-bottom: 2px solid transparent;
}

.apps svg {
  width: 16px;
  height: 16px;
}

.apps .running {
  border-color: #76b9ed;
}

.apps .focused {
  background-color: #4c4453;
}

.tray {
  display: flex;
  align-items: center;
  gap: 8px;
  margin-left: auto;
  padding-right: 26px;
}

.sun {
  width: 20px;
  height: 20px;
}

.weather {
  display: flex;
  gap: 10px;
  margin-right: 8px;
  font-size: 13px;
}

.tray-icon {
  width: 16px;
  height: 16px;
  fill: none;
  stroke: #fff;
}

.clock {
  margin: 0 12px 0 8px;
}
```
